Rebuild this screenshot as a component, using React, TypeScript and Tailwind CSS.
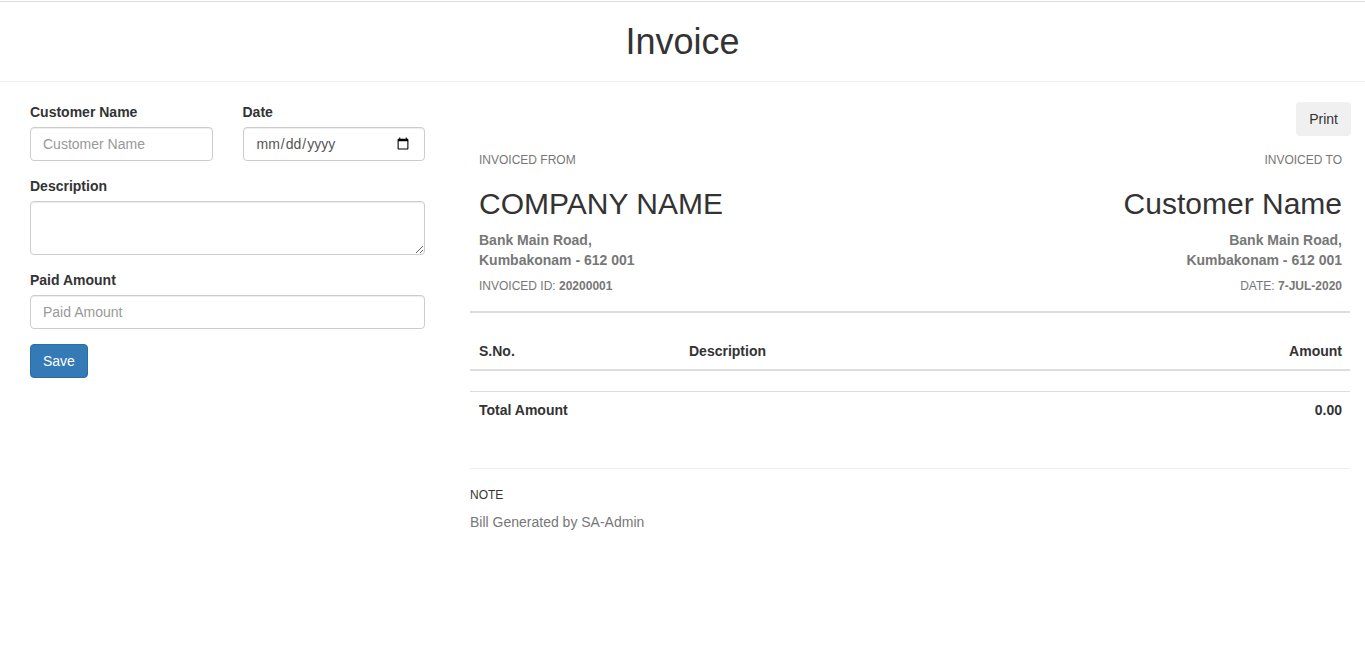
import { useState } from "react";

const labelCls = "block text-sm font-bold text-[#333] mb-[5px] leading-5";
const inputCls =
    "block w-full h-[34px] px-3 text-sm text-[#555] bg-white border border-[#ccc] rounded shadow-[inset_0_1px_1px_rgba(0,0,0,0.075)] placeholder:text-[#999] outline-none";

export default function App() {
    const [customerName, setCustomerName] = useState("");
    const [date, setDate] = useState("");
    const [description, setDescription] = useState("");
    const [paidAmount, setPaidAmount] = useState("");

    return (
        <div className="min-h-[657px] bg-white text-[#333] font-['Liberation_Sans',Arial,sans-serif] text-sm">
            <div className="mt-px border-t border-[#ddd]">
                <h1 className="h-20 flex items-center justify-center text-[36px] leading-none text-[#333] font-normal border-b border-[#eee]">
                    Invoice
                </h1>
            </div>

            <div className="flex pl-[30px] pr-[15px] gap-[45px]">
                {/* form */}
                <form className="w-[395px] shrink-0 pt-5" onSubmit={(e) => e.preventDefault()}>
                    <div className="grid grid-cols-2 gap-[30px] mb-[15px]">
                        <div>
                            <label className={labelCls}>Customer Name</label>
                            <input
                                type="text"
                                value={customerName}
                                onChange={(e) => setCustomerName(e.target.value)}
                                className={inputCls}
                                placeholder="Customer Name"
                            />
                        </div>
                        <div>
                            <label className={labelCls}>Date</label>
                            <input
                                type="date"
                                value={date}
                                onChange={(e) => setDate(e.target.value)}
                                className={inputCls}
                            />
                        </div>
                    </div>

                    <div className="mb-[15px]">
                        <label className={labelCls}>Description</label>
                        <textarea
                            value={description}
                            onChange={(e) => setDescription(e.target.value)}
                            className="block w-full h-[54px] px-3 py-1.5 text-sm text-[#555] bg-white border border-[#ccc] rounded shadow-[inset_0_1px_1px_rgba(0,0,0,0.075)] outline-none"
                        />
                    </div>

                    <div className="mb-[15px]">
                        <label className={labelCls}>Paid Amount</label>
                        <input
                            type="text"
                            value={paidAmount}
                            onChange={(e) => setPaidAmount(e.target.value)}
                            className={inputCls}
                            placeholder="Paid Amount"
                        />
                    </div>

                    <button
                        type="submit"
                        className="h-[34px] px-3 text-sm text-white bg-[#337ab7] border border-[#2e6da4] rounded"
                    >
                        Save
                    </button>
                </form>

                {/* invoice preview */}
                <div className="flex-1 pt-5">
                    <div className="flex justify-end -mr-px">
                        <button
                            type="button"
                            className="h-[34px] px-[13px] text-sm text-[#333] bg-[#f0f0f0] rounded"
                        >
                            Print
                        </button>
                    </div>

                    <div className="flex justify-between pl-[9px] pr-[8px] mt-[16px]">
                        <div>
                            <div className="text-xs leading-[17px] text-[#777] uppercase">Invoiced From</div>
                            <div className="text-[30px] leading-[33px] text-[#333] mt-[18px]">COMPANY NAME</div>
                            <div className="mt-[10px] font-bold text-[#777] leading-5">
                                Bank Main Road,<br />
                                Kumbakonam - 612 001
                            </div>
                            <div className="mt-[8px] text-xs leading-[17px] text-[#777]">
                                INVOICED ID: <span className="font-bold">20200001</span>
                            </div>
                        </div>
                        <div className="text-right">
                            <div className="text-xs leading-[17px] text-[#777] uppercase">Invoiced To</div>
                            <div className="text-[30px] leading-[33px] text-[#333] mt-[18px]">Customer Name</div>
                            <div className="mt-[10px] font-bold text-[#777] leading-5">
                                Bank Main Road,<br />
                                Kumbakonam - 612 001
                            </div>
                            <div className="mt-[8px] text-xs leading-[17px] text-[#777]">
                                DATE: <span className="font-bold">7-JUL-2020</span>
                            </div>
                        </div>
                    </div>

                    <div className="mt-[16px] border-t-2 border-[#ddd]" />

                    <table className="w-full mt-5 mb-[40px] border-collapse">
                        <thead>
                            <tr className="border-b-2 border-[#ddd]">
                                <th className="w-[211px] p-2 pl-[9px] text-left font-bold leading-5">S.No.</th>
                                <th className="p-2 text-left font-bold leading-5">Description</th>
                                <th className="p-2 pr-[8px] text-right font-bold leading-5">Amount</th>
                            </tr>
                        </thead>
                        <tbody>
                            <tr className="h-[21px]">
                                <td colSpan={3} />
                            </tr>
                            <tr className="border-t border-[#ddd]">
                                <td className="p-2 pl-[9px] font-bold leading-5">Total Amount</td>
                                <td className="p-2" />
                                <td className="p-2 pr-[8px] text-right font-bold leading-5">0.00</td>
                            </tr>
                        </tbody>
                    </table>

                    <div className="border-t border-[#eee]" />

                    <div className="mt-[18px] text-xs leading-[17px] text-[#333]">NOTE</div>
                    <div className="mt-[8px] text-sm leading-5 text-[#777]">Bill Generated by SA-Admin</div>
                </div>
            </div>
        </div>
    );
}
